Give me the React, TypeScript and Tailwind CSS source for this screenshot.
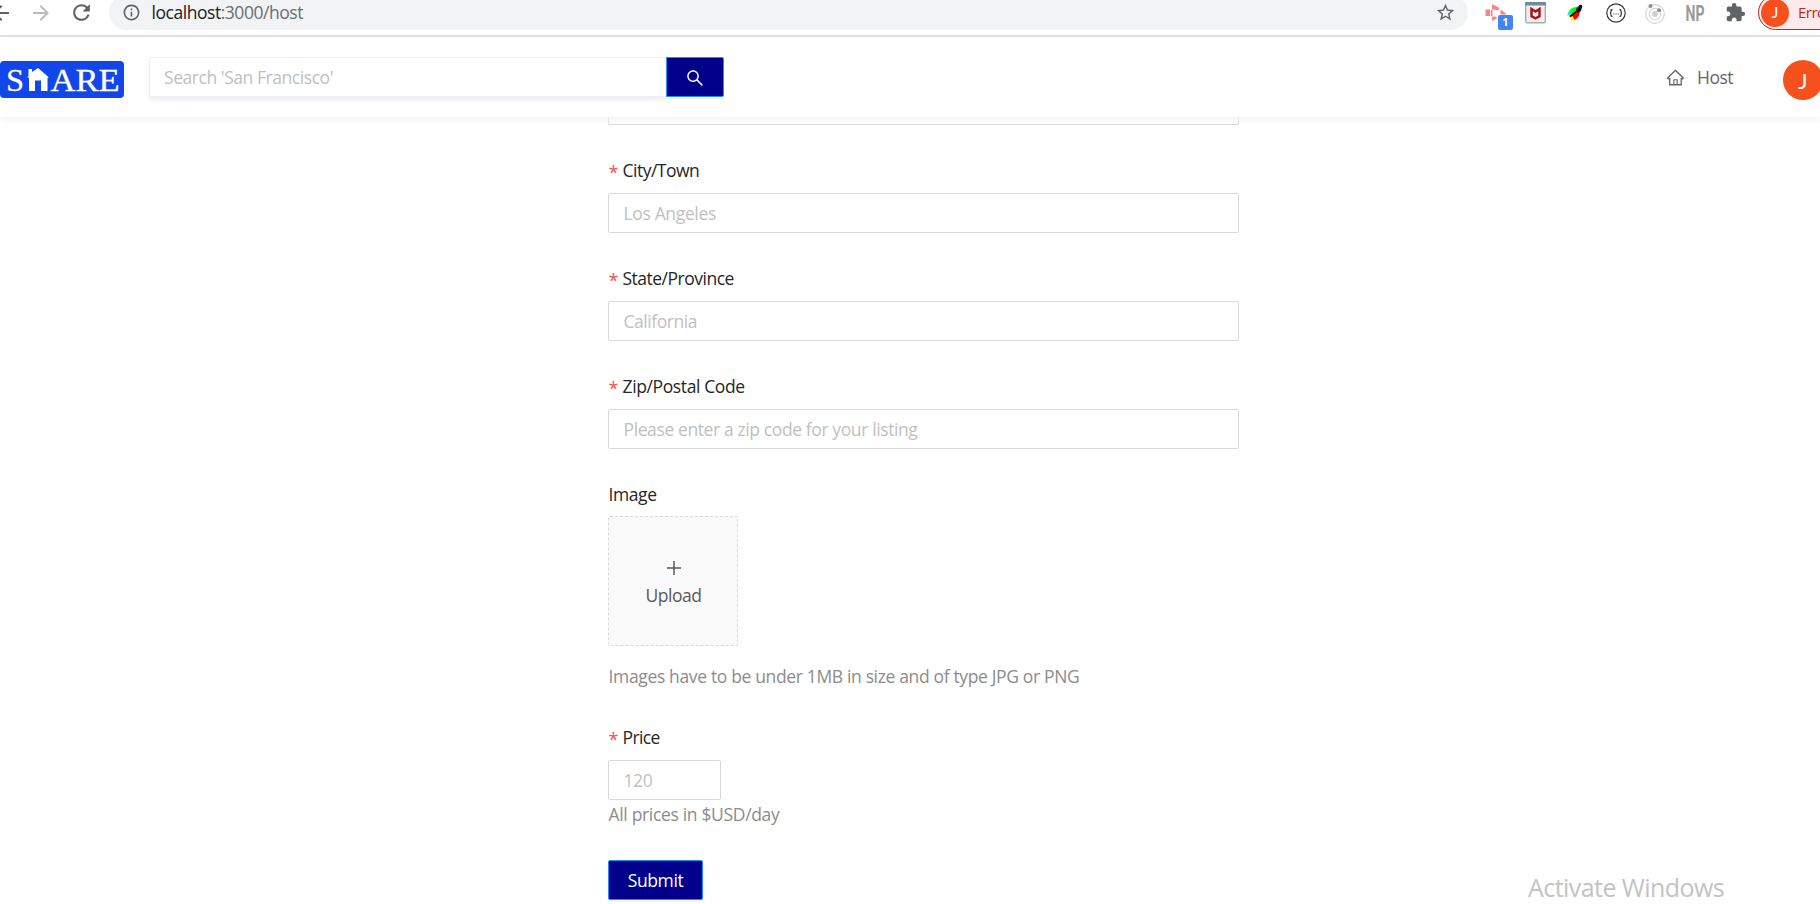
import React from "react";
import { MdArrowBack, MdArrowForward, MdExtension, MdInfoOutline, MdRefresh, MdStarBorder } from "react-icons/md";
import { AiOutlineHome, AiOutlinePlus, AiOutlineSearch } from "react-icons/ai";

function RedArrowIcon() {
  return (
    <div className="relative h-[25px] w-[28px] shrink-0">
      <svg className="h-[25px] w-[28px]" viewBox="0 0 28 25" fill="#fb8383">
        <path d="M0.500 9.500h4.500v6.500H0.500zM6 9.500h1.500v6.500H6z" />
        <path d="M7 4l7.500 4-1.500 2.500-6-1.500zM7 21v-4.500h3l2.500 1.500z" />
        <path d="M15.500 9.500l5.500 4v1h-5.500z" />
      </svg>
      <span className="absolute top-[15px] left-[13px] flex h-[15px] w-[15px] items-center justify-center rounded-[2px] bg-[#4285f4] text-[11px] font-bold text-white">
        1
      </span>
    </div>
  );
}

function ShieldIcon() {
  return (
    <svg className="h-[22px] w-[21px] shrink-0" viewBox="0 0 21 22">
      <rect x="0.700" y="0.700" width="19.600" height="20" rx="1.500" fill="#f1f1f1" stroke="#a6adb0" strokeWidth="1.400" />
      <rect x="0" y="0" width="21" height="3.500" rx="1" fill="#708c99" />
      <path d="M6.500 7v7.300l4 2 4-2V7L10.500 9.500z" fill="none" stroke="#a8121c" strokeWidth="2.500" />
    </svg>
  );
}

function FeatherIcon() {
  return (
    <svg className="h-[18px] w-[17px] shrink-0" viewBox="0 0 17 18">
      <path d="M2 10C3 5 7 3 13 2.500l1 2.500-8 5z" fill="#0f0" />
      <path d="M1 12l4-2 2-4-4 2z" fill="#0ee" />
      <path d="M3 12l8-6 2 1-7 7z" fill="#111" />
      <path d="M5 13l8-7c2 4-1 9-5 10z" fill="#f00" />
      <path d="M3.500 14l3-2 2 4-3 1z" fill="#ff0" />
      <path d="M10 5l3-3 3 1-1 4-3 2z" fill="#111" />
      <circle cx="14.500" cy="2.500" r="1.800" fill="#111" />
    </svg>
  );
}

function BracesIcon() {
  return (
    <svg className="h-[20px] w-[20px] shrink-0" viewBox="0 0 20 20" fill="none" stroke="#3a3a3a">
      <circle cx="10" cy="10" r="9.200" strokeWidth="1.200" />
      <path d="M6.500 6.500c-1.500 0-1.500.5-1.500 1.500s0 2-1 2c1 0 1 1 1 2s0 1.500 1.500 1.500M13.500 6.500c1.500 0 1.500.5 1.500 1.500s0 2 1 2c-1 0-1 1-1 2s0 1.500-1.500 1.500" strokeWidth="1.300" />
      <path d="M7.500 11h1M9.600 11h1M11.700 11h1" strokeWidth="1" />
    </svg>
  );
}

function OrbitIcon() {
  return (
    <svg className="h-[22px] w-[22px] shrink-0" viewBox="0 0 22 22" fill="none" stroke="#d4d4d4">
      <circle cx="11" cy="12" r="9.300" strokeWidth="1.200" />
      <circle cx="11" cy="12" r="5.700" strokeWidth="1.100" />
      <circle cx="11" cy="12" r="2.900" fill="#d0d0d0" stroke="none" />
      <circle cx="6.500" cy="4" r="2" fill="#8f8f8f" stroke="none" />
      <circle cx="15" cy="8.300" r="2" fill="#8f8f8f" stroke="none" />
    </svg>
  );
}

function BrowserBar() {
  return (
    <div className="h-[37px] overflow-hidden border-b-2 border-[#dadce0] bg-white">
      <div className="flex h-[25px] items-center">
        <MdArrowBack className="-ml-[11px] size-6 shrink-0 text-[#5f6368]" />
        <MdArrowForward className="ml-4 size-6 shrink-0 text-[#babcbe]" />
        <MdRefresh className="ml-4 size-[25px] shrink-0 text-[#5f6368]" />
        <div className="ml-[15px] flex h-[35px] w-[1359px] shrink-0 items-center rounded-full bg-[#f1f3f4] pr-[12px] pl-[13px]">
          <MdInfoOutline className="size-[19px] shrink-0 text-[#5f6368]" />
          <span className="ml-[10.5px] text-[17.5px] tracking-[-0.46px] whitespace-nowrap text-[#6b6f73]">
            <span className="text-[#202124]">localhost</span>:3000/host
          </span>
          <MdStarBorder className="ml-auto size-[21px] shrink-0 text-[#5f6368]" />
        </div>
        <div className="ml-[17px] flex shrink-0 items-center">
          <RedArrowIcon />
          <div className="ml-[12px] flex">
            <ShieldIcon />
          </div>
          <div className="ml-[20px] flex">
            <FeatherIcon />
          </div>
          <div className="ml-[23px] flex">
            <BracesIcon />
          </div>
          <div className="ml-[18px] flex">
            <OrbitIcon />
          </div>
          <svg className="ml-[19px] h-[25px] w-[21px] overflow-visible" viewBox="0 0 21 25">
            <text x="0.500" y="20.500" textLength="19" lengthAdjust="spacingAndGlyphs" fill="#9a9a9a" fontSize="22" fontWeight="700" fontFamily="Roboto, sans-serif">
              NP
            </text>
          </svg>
          <MdExtension className="ml-[19px] size-[21px] text-[#5f6368]" />
        </div>
        <div className="ml-[12px] flex h-[35px] w-[120px] shrink-0 items-center rounded-l-full border border-[#c5221f] bg-[#fcebea] pl-[2px]">
          <span className="flex size-[28px] items-center justify-center rounded-full bg-[#f6511d] font-[Lato,sans-serif] text-[15.5px] text-white">J</span>
          <span className="ml-[9px] text-[15px] tracking-[-0.5px] text-[#c5221f]">Error</span>
        </div>
      </div>
    </div>
  );
}

function Logo() {
  return (
    <svg className="h-[37px] w-[124px] shrink-0" viewBox="0 0 124 37" fontFamily="'Liberation Serif', serif" fontSize="31">
      <rect width="124" height="37" rx="4" fill="#1147e9" />
      <text x="6" y="30" fill="#fff" stroke="#fff" strokeWidth="0.300" textLength="18" lengthAdjust="spacingAndGlyphs">
        S
      </text>
      <path d="M28.500 8h3.500v3l6-4 11 9.500h-1.500V30H41V19.500h-6V30h-6V16.500h-2l1.500-1.500z" fill="#fff" />
      <text x="50.500" y="30" fill="#fff" stroke="#fff" strokeWidth="0.300" textLength="69" lengthAdjust="spacingAndGlyphs">
        ARE
      </text>
    </svg>
  );
}

function AppHeader() {
  return (
    <header className="relative z-10 flex h-20 items-center bg-white shadow-[0_2px_8px_#f0f0f1]">
      <div className="mt-[5px] flex">
        <Logo />
      </div>
      <div className="ml-[25px] flex h-10 w-[575px]">
        <div className="flex flex-1 items-center rounded-l-[2px] border border-r-0 border-[#f0f0f3] bg-white pt-px pl-[14px] text-[17.5px] tracking-[-0.45px] text-[#bfbfbf] shadow-[0_3px_5px_#ebebf2]">
          Search 'San Francisco'
        </div>
        <button className="flex w-[58px] items-center justify-center rounded-r-[2px] border border-[#1890ff] bg-[#00008b] text-white">
          <AiOutlineSearch className="mt-px size-[20px]" />
        </button>
      </div>
      <div className="ml-auto flex items-center pr-[50px] text-[#666]">
        <AiOutlineHome className="size-[19px]" />
        <span className="ml-[12px] pt-px text-[17.5px] tracking-[-0.5px]">Host</span>
      </div>
      <div className="mt-[6px] -mr-[3px] flex size-10 shrink-0 items-center justify-center rounded-full bg-[#f6511d] pt-px font-[Lato,sans-serif] text-[22px] text-white">
        J
      </div>
    </header>
  );
}

function Label({ text, required, tracking }: { text: string; required?: boolean; tracking: string }) {
  return (
    <div className="flex h-10 items-start pt-[4px] pl-[0.5px] text-[17.5px] leading-[26px] text-[#262626]">
      {required && <span className="mr-[4px] w-[10px] pt-[2px] text-[18px] text-[#ff4d4f]">*</span>}
      <span className={tracking}>{text}</span>
    </div>
  );
}

function TextBox({ placeholder, size, tracking }: { placeholder: string; size: string; tracking: string }) {
  return (
    <div className={`flex h-10 items-center rounded-[2px] border border-[#d9d9d9] bg-white pl-[14.5px] text-[17.5px] whitespace-nowrap text-[#bfbfbf] ${size} ${tracking}`}>
      {placeholder}
    </div>
  );
}

function HostForm() {
  return (
    <form className="ml-[608px] flex w-[631px] flex-col">
      <div className="-mt-8 mb-7">
        <TextBox placeholder="" size="w-full" tracking="tracking-normal" />
      </div>
      <div className="mb-7">
        <Label text="City/Town" required tracking="tracking-[-0.5px]" />
        <TextBox placeholder="Los Angeles" size="w-full" tracking="tracking-[-0.35px]" />
      </div>
      <div className="mb-7">
        <Label text="State/Province" required tracking="tracking-[-0.5px]" />
        <TextBox placeholder="California" size="w-full" tracking="tracking-[-0.45px]" />
      </div>
      <div className="mb-7">
        <Label text="Zip/Postal Code" required tracking="tracking-[-0.38px]" />
        <TextBox placeholder="Please enter a zip code for your listing" size="w-full" tracking="tracking-[-0.39px]" />
      </div>
      <div className="-mb-px h-10">
        <Label text="Image" tracking="tracking-[-0.4px]" />
      </div>
      <div className="flex size-[130px] flex-col items-center justify-center rounded-[2px] border border-dashed border-[#d9d9d9] bg-[#fafafa] pl-px text-[#595959]">
        <AiOutlinePlus className="mt-[3px] size-[20px]" />
        <span className="mt-[4px] text-[17.5px] leading-[26px] tracking-[-0.45px]">Upload</span>
      </div>
      <p className="mt-[17px] mb-[31px] pl-[0.5px] text-[17.5px] leading-[26px] tracking-[-0.35px] whitespace-nowrap text-[#8c8c8c]">
        Images have to be under 1MB in size and of type JPG or PNG
      </p>
      <Label text="Price" required tracking="tracking-[-0.6px]" />
      <TextBox placeholder="120" size="w-[113px]" tracking="tracking-[-0.4px]" />
      <p className="mt-px mb-[33px] pl-[0.5px] text-[17.5px] leading-[26px] tracking-[-0.33px] text-[#8c8c8c]">All prices in $USD/day</p>
      <button
        type="button"
        className="flex h-10 w-[95px] items-center justify-center rounded-[2px] border border-[#1890ff] bg-[#00008b] text-[17.5px] tracking-[-0.4px] text-white shadow-[0_2px_0_rgba(0,0,0,0.04)]"
      >
        Submit
      </button>
    </form>
  );
}

export default function App() {
  return (
    <div className="relative h-[904px] w-[1820px] overflow-hidden bg-white font-['Open_Sans','Noto_Sans',sans-serif]">
      <BrowserBar />
      <AppHeader />
      <HostForm />
      <div className="absolute top-[870px] left-[1528px] text-[25px] leading-[34px] tracking-[-0.56px] whitespace-nowrap text-[#c3c3c3]">
        Activate Windows
      </div>
    </div>
  );
}
